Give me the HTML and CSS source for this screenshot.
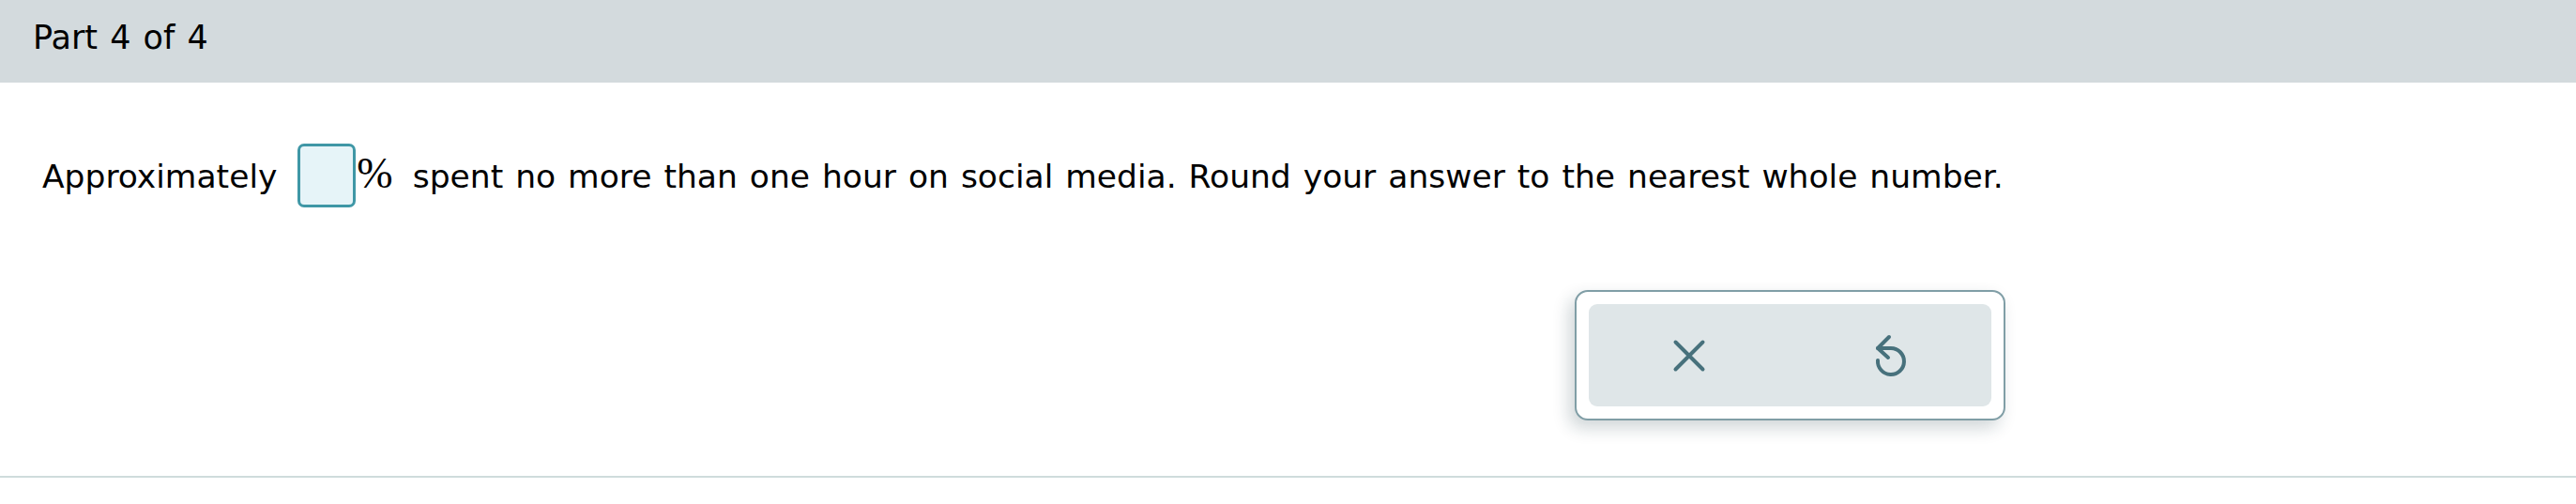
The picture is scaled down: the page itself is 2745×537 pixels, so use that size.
FILE: index.html
```html
<!DOCTYPE html>
<html lang="en">
<head>
<meta charset="utf-8">
<title>Part 4 of 4</title>
<link rel="stylesheet" href="styles.css">
</head>
<body>
<header class="part-header">Part 4 of 4</header>
<main class="content">
  <p class="question">Approximately <span class="answer-box"></span><span class="pct">%</span>spent no more than one hour on social media. Round your answer to the nearest whole number.</p>
  <div class="actions-row">
    <div class="actions-panel">
      <div class="actions-inner">
        <button class="icon-btn" type="button" aria-label="Clear">
          <svg width="40" height="40" viewBox="0 0 40 40" fill="none" stroke="currentColor" stroke-width="4" stroke-linecap="round">
            <path d="M5.5 5.5 L34.5 34.5 M34.5 5.5 L5.5 34.5"/>
          </svg>
        </button>
        <button class="icon-btn" type="button" aria-label="Reset">
          <svg width="44" height="52" viewBox="0 0 44 52" fill="none" stroke="currentColor" stroke-width="4" stroke-linecap="round" stroke-linejoin="round">
            <path d="M20 6 L8 18 L19 28"/>
            <path d="M8 18 H22 A14 14 0 1 1 8 31"/>
          </svg>
        </button>
      </div>
    </div>
  </div>
</main>
<div class="bottom-rule"></div>
</body>
</html>
```
FILE: styles.css
```css
html, body {
  margin: 0;
  padding: 0;
  background: #ffffff;
}
body {
  font-family: "DejaVu Sans", Verdana, sans-serif;
  font-size: 34.5px;
  color: #000000;
}
.part-header {
  box-sizing: border-box;
  height: 88px;
  padding: 20px 0 0 35px;
  background: #d3dadd;
  line-height: normal;
  font-size: 35px;
  word-spacing: 2px;
}
.content {
  padding: 65px 45px 0 45px;
}
.question {
  margin: 0;
  line-height: 40px;
  white-space: nowrap;
  word-spacing: 2px;
}
.answer-box {
  display: inline-block;
  box-sizing: border-box;
  width: 62px;
  height: 68px;
  margin-left: 9px;
  border: 3px solid #3f97a6;
  border-radius: 7px;
  background: #e6f4f8;
  vertical-align: -21px;
}
.pct {
  font-family: "Liberation Serif", "Times New Roman", serif;
  font-size: 46px;
  margin-left: 1px;
  margin-right: 21px;
}
.actions-row {
  display: flex;
  justify-content: flex-end;
  width: 2092px;
  margin-top: 88px;
}
.actions-panel {
  box-sizing: border-box;
  width: 459px;
  height: 139px;
  padding: 13px;
  border: 2px solid #809ea6;
  border-radius: 14px;
  background: #ffffff;
  box-shadow: -6px 8px 18px rgba(20, 50, 60, 0.2);
}
.actions-inner {
  display: flex;
  height: 100%;
  border-radius: 9px;
  background: #dfe6e8;
}
.icon-btn {
  flex: 1;
  display: flex;
  align-items: center;
  justify-content: center;
  border: 0;
  padding: 0;
  background: transparent;
  color: #47717c;
}
.bottom-rule {
  height: 2px;
  margin-top: 59px;
  background: #cfdcdc;
}
```
